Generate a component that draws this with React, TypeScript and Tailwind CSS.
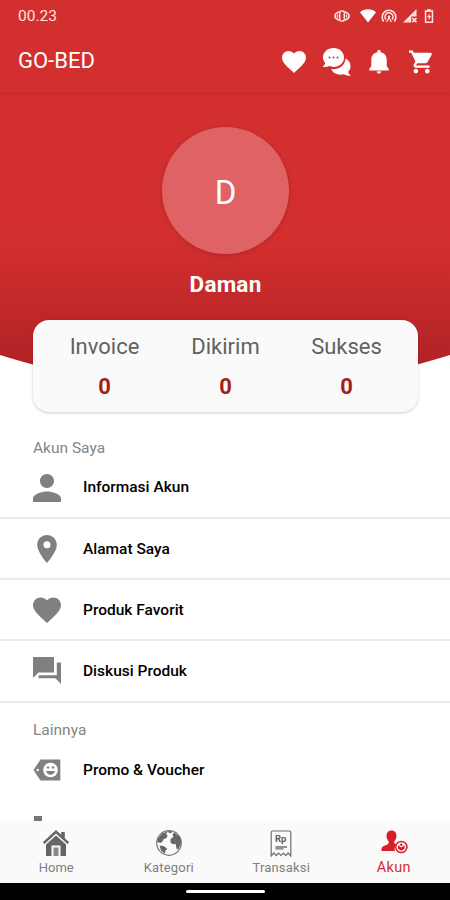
import type { ReactNode } from 'react';

type MenuItem = {
    label: string;
    icon: ReactNode;
};

const stats = [
    { label: 'Invoice', value: 0 },
    { label: 'Dikirim', value: 0 },
    { label: 'Sukses', value: 0 },
];

const accountItems: MenuItem[] = [
    {
        label: 'Informasi Akun',
        icon: (
            <svg viewBox="4 4 16 16" className="size-7" fill="currentColor">
                <path d="M12 12c2.21 0 4-1.79 4-4s-1.79-4-4-4-4 1.79-4 4 1.79 4 4 4zm0 2c-2.67 0-8 1.34-8 4v2h16v-2c0-2.66-5.33-4-8-4z" />
            </svg>
        ),
    },
    {
        label: 'Alamat Saya',
        icon: (
            <svg viewBox="2 2 20 20" className="size-7" fill="currentColor">
                <path d="M12 2C8.13 2 5 5.13 5 9c0 5.25 7 13 7 13s7-7.75 7-13c0-3.87-3.13-7-7-7zm0 9.5a2.5 2.5 0 0 1 0-5 2.5 2.5 0 0 1 0 5z" />
            </svg>
        ),
    },
    {
        label: 'Produk Favorit',
        icon: (
            <svg viewBox="2 2 20 20" className="size-7" fill="currentColor">
                <path d="m12 21.35-1.45-1.32C5.4 15.36 2 12.28 2 8.5 2 5.42 4.42 3 7.5 3c1.74 0 3.41.81 4.5 2.09C13.09 3.81 14.76 3 16.5 3 19.58 3 22 5.42 22 8.5c0 3.78-3.4 6.86-8.55 11.54L12 21.35z" />
            </svg>
        ),
    },
    {
        label: 'Diskusi Produk',
        icon: (
            <svg viewBox="2 2 20 20" className="size-7" fill="currentColor">
                <path d="M22 6h-3v9H6v2.2h12l4 4V6zm-5 7V2H2v15l4-4h11z" />
            </svg>
        ),
    },
];

function StatusIcons() {
    return (
        <div className="flex items-center text-[#ffe3e0]">
            <svg viewBox="0 0 16 14" className="mr-2.5 h-[14px] w-4" fill="none" stroke="currentColor">
                <path d="M5 2.800C2.500 3.800 1 5.500.7 7c.3 1.500 1.800 3.200 4.300 4.200M11 2.800c2.500 1 4 2.700 4.300 4.200-.3 1.500-1.800 3.200-4.300 4.200" strokeWidth="1.500" />
                <path d="M3.500 5.500v3M12.500 5.500v3" strokeWidth="1.200" />
                <rect x="5.700" y="2" width="4.600" height="10" rx="1.500" strokeWidth="1.500" />
            </svg>
            <svg viewBox="0 0 16 14" className="mr-[5px] h-[14px] w-4 text-white" fill="currentColor">
                <path d="M0 3.200C4.500-.6 11.500-.6 16 3.200L8 13.500z" />
            </svg>
            <svg viewBox="0 0 16 14" className="mr-1.5 h-[14px] w-4" fill="none" stroke="currentColor" strokeWidth="1.600">
                <path d="M2.800 12.500A6.800 6.800 0 1 1 13.200 12.500" />
                <path d="M5 10.500A4 4 0 1 1 11 10.500" />
                <circle cx="8" cy="8" r="1.400" fill="currentColor" stroke="none" />
                <path d="M5.500 13 8 9l2.500 4" strokeWidth="1.200" />
            </svg>
            <svg viewBox="0 0 14 14" className="mr-[7px] size-[14px]" fill="currentColor">
                <path d="M0 13.500 13.500 0v7.500H8.200v6z" />
                <path d="m9.300 9 4.200 4.200M13.500 9l-4.200 4.200" stroke="currentColor" strokeWidth="1.700" />
            </svg>
            <svg viewBox="0 0 10 14" className="h-[14px] w-[10px]" fill="currentColor">
                <path fillRule="evenodd" d="M3.300 0h3.400v1.300H9.200V14H.8V1.300h2.500zM2.300 3v9.500h5.400V3z" />
                <path d="M5.700 4.300 3 8.200h1.700v3L7.200 7H5.500z" />
            </svg>
        </div>
    );
}

function AppBarActions() {
    return (
        <div className="flex items-center pt-1 text-white">
            <svg viewBox="2 3 20 18.4" className="mr-4 h-[22px] w-6" fill="currentColor">
                <path d="m12 21.35-1.45-1.32C5.4 15.36 2 12.28 2 8.5 2 5.42 4.42 3 7.5 3c1.74 0 3.41.81 4.5 2.09C13.09 3.81 14.76 3 16.5 3 19.58 3 22 5.42 22 8.5c0 3.78-3.4 6.86-8.55 11.54L12 21.35z" />
            </svg>
            <svg viewBox="0 0 30 28" className="mr-[17px] h-7 w-[30px]" fill="currentColor">
                <path d="M23.500 10.500c3 1.500 5 4.300 5 7.500 0 2.300-.9 4.300-2.300 5.800.2 1.700 1.200 2.800 2.800 3.900-2.500.3-5-.2-7-1.400-5.500 1.300-11-.6-12.800-5.200 8 .8 14-3.800 14.300-10.600z" />
                <path d="M11.500 0C17.600 0 22 4.200 22 9.400s-4.400 9.500-10.500 9.500c-1.500 0-3-.3-4.200-.8-2 1-4.600 1.300-6.800.7C2.100 17.700 3 16.400 3 14.700 1.700 13.200 1 11.400 1 9.400 1 4.200 5.400 0 11.500 0z" />
                <g fill="#b9373a">
                    <circle cx="7.500" cy="9.500" r="1" />
                    <circle cx="11.500" cy="9.500" r="1" />
                    <circle cx="15.500" cy="9.500" r="1" />
                </g>
            </svg>
            <svg viewBox="0 0 20 24" className="mr-5 h-6 w-5" fill="currentColor">
                <path d="M10 0c1 0 1.700.7 1.700 1.600v.6c3.600.8 6 3.400 6 6.900V16l2 3v1.500H.3V19l2-3V9.100c0-3.500 2.400-6.100 6-6.900v-.6C8.300.7 9 0 10 0z" />
                <path d="M7.600 21.300h4.800c0 1.400-1.100 2.500-2.400 2.500s-2.400-1.100-2.400-2.500z" fill="#ffe0b8" />
            </svg>
            <svg viewBox="1 2 21 20" className="mr-px h-6 w-6" fill="currentColor">
                <path d="M7 18c-1.100 0-1.990.9-1.990 2S5.900 22 7 22s2-.9 2-2-.9-2-2-2zM1 2v2h2l3.600 7.590-1.350 2.450c-.16.28-.25.61-.25.96 0 1.100.9 2 2 2h12v-2H7.420c-.14 0-.25-.11-.25-.25l.03-.12.9-1.630h7.450c.75 0 1.410-.41 1.750-1.030l3.580-6.490A1.003 1.003 0 0 0 20 4H5.210l-.94-2H1zm16 16c-1.100 0-1.990.9-1.990 2s.89 2 1.990 2 2-.9 2-2-.9-2-2-2z" />
            </svg>
        </div>
    );
}

function MenuRow({ item }: { item: MenuItem }) {
    return (
        <div className="flex items-center pl-[33px] text-[#808080]">
            {item.icon}
            <span className="ml-[22px] pt-px text-[15.5px] font-medium text-black">{item.label}</span>
        </div>
    );
}

function BottomNav() {
    return (
        <nav className="grid h-[62px] grid-cols-4 bg-[#fafafa] text-[13px] text-[#808080]">
            <div className="flex flex-col items-center pt-2">
                <svg viewBox="0 0 28 28" className="size-7" fill="#666">
                    <path d="M14 1 .8 13.300l1.700 1.600L14 4.600l11.500 10.300 1.700-1.600-4.400-4.100V3h-3.600v2.800z" />
                    <path fillRule="evenodd" d="M14 6.500 4 15.400V27h5.500V16.500h9V27H24V15.400z" />
                    <path d="M11.500 18.500h5V27h-5z" fill="#8a8a8a" />
                </svg>
                <span className="leading-[22px]">Home</span>
            </div>
            <div className="flex flex-col items-center pt-2">
                <svg viewBox="0 0 28 28" className="size-7">
                    <circle cx="14" cy="14" r="12.300" fill="#fafafa" stroke="#777" strokeWidth="1.200" />
                    <path d="M13 2.200 7 4.500 3 9.500 2.300 13l3.200 1 1.800-1.200 1.200-2.500 3.300-1.600.7-2.500-1.500-1.200zM4.500 16.500l4 .5 3.800 2.700-2 2.300-.3 2.800L6 21.500zM19 3.500l-1.500 2.300 1 2-3 2.500v3.200l2.500 1.700 2.700-.2.800 4.500 1.500 1.200L25 17l1.300-4-1.200-5zM12 2.600l3 1.600 3-1.200-3-1z" fill="#666" />
                </svg>
                <span className="leading-[22px] tracking-[0.015em]">Kategori</span>
            </div>
            <div className="flex flex-col items-center pt-2">
                <svg viewBox="0 0 28 28" className="size-7" fill="none" stroke="#707070">
                    <path d="M4.200 27V3.500C4.200 2.500 4.900 2 5.700 2h16.600c.8 0 1.500.5 1.500 1.500V27l-2.700-3-2.300 2.500-2.400-2.500-2.400 2.500-2.400-2.500-2.400 2.500L6.900 24z" strokeWidth="1.200" />
                    <path d="M8.500 18h11.500M8.500 19.800h8" strokeWidth="1.300" />
                    <text x="8" y="13" fontSize="9.500" fontWeight="700" fontFamily="Roboto, sans-serif" fill="#606060" stroke="none">Rp</text>
                </svg>
                <span className="leading-[22px] tracking-[0.015em]">Transaksi</span>
            </div>
            <div className="flex flex-col items-center pt-2 text-[#d32f2f]">
                <svg viewBox="0 0 28 28" className="size-7" fill="#d61f26">
                    <path d="M11.500 1.500c3 0 5 2.200 5 5.300 0 2.300-.9 4.400-2.300 5.600v1.300c0 .8 1 1.300 2.200 1.800-1.700 1.800-2.300 4.200-1.400 6.500H1.500v-2.400c0-3 7.300-3.500 7.300-5.900v-1.300C7.400 11.200 6.500 9.100 6.500 6.800c0-3.100 2-5.300 5-5.300z" />
                    <circle cx="21.300" cy="18" r="5.600" fill="none" stroke="#d61f26" strokeWidth="1.500" />
                    <path d="M18 16.200v3.600l3.300 2 3.300-2v-3.600l-3.300 2.200z" />
                    <circle cx="21.300" cy="15.700" r="1.200" />
                </svg>
                <span className="text-[14.500px] leading-[21px] tracking-[0.02em]">Akun</span>
            </div>
        </nav>
    );
}

export default function App() {
    return (
        <div className="relative isolate flex h-[900px] w-[450px] flex-col overflow-hidden bg-white font-[Roboto,sans-serif]">
            {/* Curved red backdrop behind header and profile */}
            <div className="absolute inset-x-0 top-0 -z-10 h-[390px] bg-linear-to-b from-[#d32f2f] from-62% to-[#aa2024] [clip-path:circle(741px_at_50%_-351px)]" />

            <div className="flex h-8 items-center justify-between pr-4 pl-[18px]">
                <span className="pt-0.5 text-[15.5px] text-[#ffe3e0]">00.23</span>
                <StatusIcons />
            </div>

            <header className="flex h-[61px] items-center justify-between border-b border-[#c62d2e] pr-4 pb-1 pl-[18px] shadow-[0_1px_2px_rgba(150,20,20,0.1)]">
                <h1 className="text-[22px] text-white">GO-BED</h1>
                <AppBarActions />
            </header>

            {/* Profile */}
            <section className="flex flex-col items-center pt-[34px] pl-px">
                <div className="flex size-[127px] items-center justify-center rounded-full bg-[#df6264] pt-1 text-[33px] text-white shadow-[0_1px_4px_rgba(120,10,10,0.3)]">
                    D
                </div>
                <p className="mt-[13px] text-[22.500px] leading-[34px] font-bold tracking-[0.01em] text-white">Daman</p>
            </section>

            <section className="mr-8 ml-[33px] mt-[18.500px] grid h-[92px] shrink-0 grid-cols-3 rounded-2xl bg-[#fafafa] px-[11px] pt-[10.500px] text-center shadow-[0_1px_3px_rgba(0,0,0,0.2)]">
                {stats.map((stat) => (
                    <div key={stat.label}>
                        <p className="text-[22px] leading-[34px] text-[#616161]">{stat.label}</p>
                        <p className="mt-1.5 text-[22px] leading-[34px] font-bold text-[#a31f1f]">{stat.value}</p>
                    </div>
                ))}
            </section>

            {/* Menu */}
            <main className="min-h-0 flex-1 overflow-hidden pt-[26px]">
                <h2 className="h-5 pl-[33px] text-[15.5px] leading-5 text-[#858585]">Akun Saya</h2>
                <div className="pt-4">
                    {accountItems.map((item) => (
                        <div key={item.label} className="mb-4 h-[45.300px] border-b-2 border-[#ebebeb]">
                            <MenuRow item={item} />
                        </div>
                    ))}
                </div>

                <h2 className="mt-[17.500px] h-5 pl-[33px] text-[15.5px] leading-5 text-[#858585]">Lainnya</h2>
                <div className="pt-4">
                    <MenuRow
                        item={{
                            label: 'Promo & Voucher',
                            icon: (
                                <svg viewBox="0 0 28 28" className="size-7" fill="currentColor">
                                    <path d="M7.500 3.500H27.300v21H7.500L.5 14z" />
                                    <circle cx="17.500" cy="14" r="7.300" fill="#fff" />
                                    <circle cx="4.700" cy="14" r="1.200" fill="#fff" />
                                    <circle cx="15" cy="11.500" r="1.200" />
                                    <circle cx="20" cy="11.500" r="1.200" />
                                    <path d="M13 15h9c-.7 2.300-2.300 3.700-4.500 3.700S13.700 17.300 13 15z" />
                                </svg>
                            ),
                        }}
                    />
                </div>
                {/* Next row is cut off by the bottom navigation */}
                <div className="mt-8 ml-[34px] h-7 w-2 bg-[#757575]" />
            </main>

            <BottomNav />
            <div className="flex h-[17px] items-center justify-center bg-black">
                <div className="h-[3px] w-[79px] rounded-full bg-white" />
            </div>
        </div>
    );
}
